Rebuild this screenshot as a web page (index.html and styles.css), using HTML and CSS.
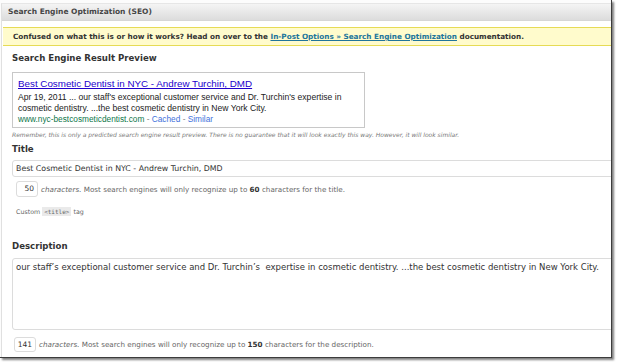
FILE: index.html
```html
<!DOCTYPE html>
<html>
<head>
<meta charset="utf-8">
<link rel="stylesheet" href="styles.css">
</head>
<body>
<div class="frame">
  <div class="box">
    <div class="hd">Search Engine Optimization (SEO)</div>
    <div class="notice">Confused on what this is or how it works? Head on over to the <a href="#">In-Post Options » Search Engine Optimization</a> documentation.</div>
    <div class="inner">
      <div class="h4 label-preview">Search Engine Result Preview</div>
      <div class="serp">
        <div class="serp-title"><a href="#">Best Cosmetic Dentist in NYC - Andrew Turchin, DMD</a></div>
        <div class="serp-desc">Apr 19, 2011 ... our staff's exceptional customer service and Dr. Turchin's expertise in cosmetic dentistry. ...the best cosmetic dentistry in New York City.</div>
        <div class="serp-url"><span class="green">www.nyc-bestcosmeticdentist.com</span> - <span class="lnk">Cached</span> - <span class="lnk">Similar</span></div>
      </div>
      <div class="note">Remember, this is only a predicted search engine result preview. There is no guarantee that it will look exactly this way. However, it will look similar.</div>
      <div class="h4 label-title">Title</div>
      <div class="input">Best Cosmetic Dentist in NYC - Andrew Turchin, DMD</div>
      <div class="count count-title"><span class="num">50</span><span class="ctext"><em>characters.</em> Most search engines will only recognize up to <b>60</b> characters for the title.</span></div>
      <div class="custom">Custom <code>&lt;title&gt;</code> tag</div>
      <div class="h4 label-desc">Description</div>
      <div class="textarea">our staff’s exceptional customer service and Dr. Turchin’s &nbsp;expertise in cosmetic dentistry. ...the best cosmetic dentistry in New York City.</div>
      <div class="count count-desc"><span class="num">141</span><span class="ctext"><em>characters.</em> Most search engines will only recognize up to <b>150</b> characters for the description.</span></div>
    </div>
  </div>
</div>
</body>
</html>
```

FILE: styles.css
```css
html, body {
  margin: 0;
  padding: 0;
  background: #fff;
}
body {
  width: 617px;
  height: 362px;
  overflow: hidden;
  font-family: "DejaVu Sans", Verdana, sans-serif;
}
.frame {
  width: 612px;
  height: 358px;
  box-sizing: border-box;
  border-right: 1px solid #3c3c3c;
  border-bottom: 1px solid #3c3c3c;
  box-shadow: 2px 2px 2px rgba(0, 0, 0, 0.5);
  background: #fcfcfc;
  overflow: hidden;
  padding: 3px 0 0 1px;
}
.box {
  height: 100%;
  border-left: 1px solid #e0e0e0;
  border-top: 1px solid #e6e6e6;
  background: #fff;
}
.hd {
  height: 16px;
  line-height: 16px;
  padding-left: 6px;
  background: linear-gradient(#f4f4f4, #dcdcdc);
  border-bottom: 1px solid #d6d6d6;
  font-size: 7.5px;
  font-weight: bold;
  color: #464646;
}
.notice {
  margin: 6px 0 0 1px;
  height: 17px;
  line-height: 17px;
  padding-left: 10px;
  background: #fffbcc;
  border-top: 1px solid #e6db55;
  border-bottom: 1px solid #e6db55;
  font-size: 7.25px;
  font-weight: bold;
  color: #333;
  white-space: nowrap;
}
.notice a {
  color: #21759b;
}
.inner {
  padding-left: 10px;
}
.h4 {
  margin-top: 7px;
  height: 12px;
  line-height: 12px;
  font-size: 8.6px;
  font-weight: bold;
  color: #333;
}
.label-preview {
  margin-top: 6px;
}
.serp {
  margin-top: 8px;
  width: 353px;
  height: 56px;
  box-sizing: border-box;
  border: 1px solid #c8c8c8;
  padding: 4px 5px 0;
  font-family: "Liberation Sans", Arial, sans-serif;
}
.serp-title {
  font-size: 9.8px;
  line-height: 14px;
}
.serp-title a {
  color: #2200cc;
}
.serp-desc, .serp-url {
  font-size: 8.6px;
  line-height: 11px;
  color: #222;
}
.serp-desc {
  margin-top: 1px;
}
.serp-url {
  font-size: 8.3px;
  color: #888;
}
.green {
  color: #0e774a;
}
.lnk {
  color: #4272db;
}
.note {
  margin-top: 3px;
  height: 8px;
  line-height: 8px;
  font-size: 6px;
  font-style: italic;
  color: #777;
  white-space: nowrap;
}
.label-title {
  margin-top: 4px;
}
.input {
  margin-top: 5px;
  width: 640px;
  height: 17px;
  box-sizing: border-box;
  border: 1px solid #dcdcdc;
  border-radius: 3px;
  padding-left: 3px;
  line-height: 15px;
  font-size: 7.85px;
  color: #333;
}
.count {
  margin-top: 4px;
  display: flex;
  align-items: center;
  height: 16px;
  white-space: nowrap;
}
.count-title {
  padding-left: 4px;
}
.count-desc {
  padding-left: 2px;
  margin-top: 7px;
  height: 15px;
}
.num {
  box-sizing: border-box;
  width: 22px;
  height: 100%;
  border: 1px solid #dcdcdc;
  border-radius: 3px;
  text-align: right;
  padding-right: 3px;
  line-height: 14px;
  font-size: 7.5px;
  color: #333;
}
.ctext {
  margin-left: 3px;
  font-size: 7.2px;
  color: #666;
}
.ctext b {
  color: #333;
}
.custom {
  margin-top: 10px;
  padding-left: 4px;
  height: 10px;
  line-height: 10px;
  font-size: 6.3px;
  color: #666;
}
.custom code {
  font-family: "DejaVu Sans Mono", monospace;
  font-size: 6px;
  background: #eaeaea;
  padding: 1px 2px;
}
.label-desc {
  margin-top: 23px;
}
.textarea {
  margin-top: 6px;
  width: 640px;
  height: 72px;
  box-sizing: border-box;
  border: 1px solid #dcdcdc;
  border-radius: 3px;
  padding: 3px 3px;
  font-size: 8.5px;
  line-height: 11px;
  color: #333;
  white-space: nowrap;
}
```
